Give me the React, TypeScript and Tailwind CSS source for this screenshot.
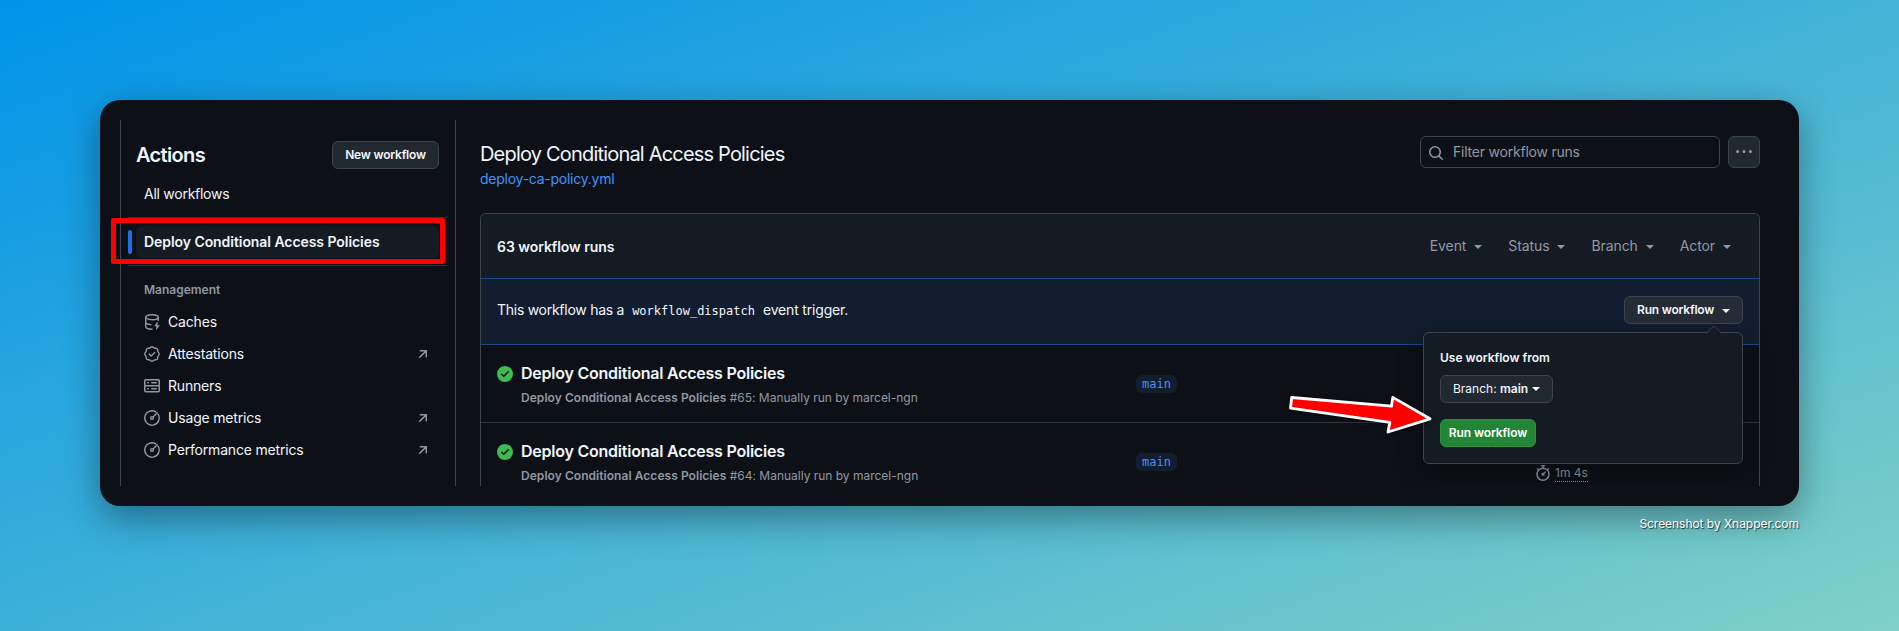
import React from "react";

const paths = {
  search:
    "M10.68 11.74a6 6 0 0 1-7.922-8.982 6 6 0 0 1 8.982 7.922l3.04 3.04a.749.749 0 0 1-.326 1.275.749.749 0 0 1-.734-.215ZM11.5 7a4.499 4.499 0 1 0-8.997 0A4.499 4.499 0 0 0 11.5 7Z",
  check:
    "M8 16A8 8 0 1 1 8 0a8 8 0 0 1 0 16Zm3.78-9.72a.751.751 0 0 0-.018-1.042.751.751 0 0 0-1.042-.018L6.75 9.19 5.28 7.72a.751.751 0 0 0-1.042.018.751.751 0 0 0-.018 1.042l2 2a.75.75 0 0 0 1.06 0Z",
  kebab:
    "M8 9a1.5 1.5 0 1 0 0-3 1.5 1.5 0 0 0 0 3ZM1.5 9a1.5 1.5 0 1 0 0-3 1.5 1.5 0 0 0 0 3Zm13 0a1.5 1.5 0 1 0 0-3 1.5 1.5 0 0 0 0 3Z",
  arrow:
    "M4.53 4.75A.75.75 0 0 1 5.28 4h6.01a.75.75 0 0 1 .75.75v6.01a.75.75 0 0 1-1.5 0v-4.2l-5.26 5.261a.749.749 0 0 1-1.275-.326.749.749 0 0 1 .215-.734L9.48 5.5h-4.2a.75.75 0 0 1-.75-.75Z",
  server:
    "M1.75 1h12.5c.966 0 1.75.784 1.75 1.75v4c0 .372-.116.717-.314 1 .198.283.314.628.314 1v4a1.75 1.75 0 0 1-1.75 1.75H1.75A1.75 1.75 0 0 1 0 12.75v-4c0-.358.109-.707.314-1a1.739 1.739 0 0 1-.314-1v-4C0 1.784.784 1 1.75 1ZM1.5 2.75v4c0 .138.112.25.25.25h12.5a.25.25 0 0 0 .25-.25v-4a.25.25 0 0 0-.25-.25H1.75a.25.25 0 0 0-.25.25Zm.25 5.75a.25.25 0 0 0-.25.25v4c0 .138.112.25.25.25h12.5a.25.25 0 0 0 .25-.25v-4a.25.25 0 0 0-.25-.25ZM7 4.75A.75.75 0 0 1 7.75 4h4.5a.75.75 0 0 1 0 1.5h-4.5A.75.75 0 0 1 7 4.75ZM7.75 10h4.5a.75.75 0 0 1 0 1.5h-4.5a.75.75 0 0 1 0-1.5ZM3 4.75A.75.75 0 0 1 3.75 4h.5a.75.75 0 0 1 0 1.5h-.5A.75.75 0 0 1 3 4.75ZM3.75 10h.5a.75.75 0 0 1 0 1.5h-.5a.75.75 0 0 1 0-1.5Z",
  stopwatch:
    "M5.75.75A.75.75 0 0 1 6.5 0h3a.75.75 0 0 1 0 1.5h-.75v1l-.001.041a6.724 6.724 0 0 1 3.464 1.435l.007-.006.75-.75a.749.749 0 0 1 1.275.326.749.749 0 0 1-.215.734l-.75.75-.006.007a6.75 6.75 0 1 1-10.548 0L2.72 5.03l-.75-.75a.751.751 0 0 1 .018-1.042.751.751 0 0 1 1.042-.018l.75.75.007.006A6.72 6.72 0 0 1 7.25 2.541V1.5H6.5a.75.75 0 0 1-.75-.75ZM8 14.5a5.25 5.25 0 1 0-.001-10.501A5.25 5.25 0 0 0 8 14.5Zm.389-6.7 1.33-1.33a.75.75 0 1 1 1.061 1.06L9.45 8.861A1.503 1.503 0 0 1 8 10.75a1.499 1.499 0 1 1 .389-2.95Z",
};

function Icon({ name, className = "size-4" }: { name: keyof typeof paths; className?: string }) {
  return (
    <svg viewBox="0 0 16 16" fill="currentColor" className={`shrink-0 ${className}`}>
      <path d={paths[name]} />
    </svg>
  );
}

function Line({ children }: { children: React.ReactNode }) {
  return (
    <svg
      viewBox="0 0 16 16"
      fill="none"
      stroke="currentColor"
      strokeWidth="1.4"
      strokeLinecap="round"
      strokeLinejoin="round"
      className="size-4 shrink-0"
    >
      {children}
    </svg>
  );
}

const CacheIcon = () => (
  <Line>
    <ellipse cx="8" cy="3.2" rx="6.3" ry="2.5" />
    <path d="M1.700 3.200v9.300c0 1.500 2.500 2.600 6.300 2.800M1.700 8c0 1.300 2 2.300 5.300 2.600M14.300 3.200v3.200" />
    <path d="M13.300 8.300 10.800 12h1.700v3.400l2.800-3.900h-2Z" fill="currentColor" strokeWidth=".6" />
  </Line>
);

const VerifiedIcon = () => (
  <Line>
    <path d="M8 .8c1.300 0 1.600 1 2.500 1.300.9.400 1.900-.1 2.700.7.800.8.300 1.800.7 2.700.300.9 1.300 1.200 1.300 2.500s-1 1.600-1.300 2.500c-.4.9.1 1.900-.7 2.700-.8.800-1.800.300-2.700.7-.9.300-1.200 1.300-2.500 1.300s-1.600-1-2.500-1.300c-.9-.4-1.900.1-2.700-.7-.8-.8-.3-1.800-.7-2.700C1.800 9.600.8 9.300.8 8s1-1.600 1.300-2.500c.4-.9-.1-1.900.7-2.700.8-.8 1.800-.3 2.700-.7C6.400 1.800 6.700.8 8 .8Z" />
    <path d="m5.300 8.100 1.900 1.900 3.500-3.600" />
  </Line>
);

const MeterIcon = () => (
  <Line>
    <path d="M11.900 1.950A7.200 7.200 0 1 0 14.200 4.400" />
    <circle cx="8" cy="8" r="1.400" />
    <path d="m9.100 6.900 4.200-4.200" />
  </Line>
);

function Caret({ className = "" }: { className?: string }) {
  return (
    <svg viewBox="0 0 8 4" fill="currentColor" className={`h-1 w-2 shrink-0 ${className}`}>
      <path d="M0 0h8L4 4Z" />
    </svg>
  );
}

const manage = [
  { label: "Caches", icon: <CacheIcon />, ext: false },
  { label: "Attestations", icon: <VerifiedIcon />, ext: true },
  { label: "Runners", icon: <Icon name="server" />, ext: false },
  { label: "Usage metrics", icon: <MeterIcon />, ext: true },
  { label: "Performance metrics", icon: <MeterIcon />, ext: true },
];

function Sidebar() {
  return (
    <aside className="h-full w-[336px] shrink-0 border-x border-[#3d444d] px-[7px]">
      <div className="mt-[21px] flex h-[28px] items-center justify-between pl-2 pr-[9px]">
        <h2 className="text-[20px] font-semibold leading-7 tracking-[-0.65px]">Actions</h2>
        <button className="h-7 w-[107px] rounded-md border border-[#3d444d] bg-[#212830] text-xs font-semibold tracking-[-0.2px]">
          New workflow
        </button>
      </div>
      <div className="mt-[9px] flex h-8 items-center pl-4 text-sm tracking-[-0.26px]">All workflows</div>
      <div className="relative mr-px mt-[7px] h-[49px] border-y border-[#2f353d] py-2">
        <div className="absolute left-0 top-[12px] h-6 w-1 rounded-md bg-[#1f6feb]" />
        <div className="mx-2 flex h-8 items-center rounded-md bg-[#151b23] pl-2 text-sm font-semibold tracking-[-0.06px]">
          Deploy Conditional Access Policies
        </div>
        <div className="absolute -left-[17px] top-0 h-[46px] w-[334px] rounded-[2px] border-[5px] border-[#ff0000]" />
      </div>
      <div className="mt-2 flex h-8 items-center pl-4 text-xs font-semibold text-[#9198a1]">Management</div>
      {manage.map((m) => (
        <div key={m.label} className="flex h-8 items-center pl-4 pr-[17px] text-sm">
          <span className="text-[#9198a1]">{m.icon}</span>
          <span className="ml-2 flex-1 tracking-[-0.18px]">{m.label}</span>
          {m.ext && <Icon name="arrow" className="size-4 text-[#9198a1]" />}
        </div>
      ))}
    </aside>
  );
}

function Run({ id, last }: { id: number; last?: boolean }) {
  return (
    <div className={`flex h-[78px] shrink-0 items-start pl-4 ${last ? "" : "border-b border-[#2f353d]"}`}>
      <Icon name="check" className="mt-[21px] size-4 text-[#3fb950]" />
      <div className="ml-2 w-[615px] pt-4">
        <div className="text-base font-semibold leading-6 tracking-[-0.23px]">Deploy Conditional Access Policies</div>
        <div className="mt-1 text-xs leading-[18px] tracking-[-0.01px] text-[#9198a1]">
          <span className="font-semibold tracking-[0.05px]">Deploy Conditional Access Policies</span> #{id}: Manually
          run by marcel-ngn
        </div>
      </div>
      <span className="mt-[30px] flex h-[18px] w-[41px] items-center justify-center rounded-md bg-[#121d2f] font-['DejaVu_Sans_Mono',monospace] text-xs text-[#4493f8]">
        main
      </span>
      {last && (
        <div className="ml-[358px] mt-[42px] flex h-4 items-center text-[#9198a1]">
          <Icon name="stopwatch" />
          <span className="ml-1 border-b border-dotted border-[#9198a1] text-xs leading-[17px]">1m 4s</span>
        </div>
      )}
    </div>
  );
}

function Popover() {
  return (
    <div className="absolute right-4 top-[53px] h-[132px] w-[320px] rounded-md border border-[#3d444d] bg-[#151b23] pl-4 pt-4 shadow-[0_8px_24px_rgba(1,4,9,0.4)]">
      <svg viewBox="0 0 16 9" className="absolute -top-2 right-5 h-[9px] w-4">
        <path d="M0 9 8 1l8 8Z" fill="#151b23" />
        <path d="M.5 8 8 .8 15.500 8" fill="none" stroke="#3d444d" />
      </svg>
      <div className="text-xs font-semibold leading-[18px]">Use workflow from</div>
      <button className="mt-2 flex h-7 w-[113px] items-center rounded-md border border-[#3d444d] bg-[#212830] pl-3 text-xs">
        <span>
          Branch: <b className="font-semibold">main</b>
        </span>
        <Caret className="ml-1" />
      </button>
      <button className="mt-4 h-7 w-24 rounded-md border border-[#2f8f40] bg-[#238636] text-xs font-semibold tracking-[-0.1px] text-white">
        Run workflow
      </button>
    </div>
  );
}

const filters = ["Event", "Status", "Branch", "Actor"];

export default function App() {
  return (
    <div className="relative h-[631px] w-[1899px] overflow-hidden bg-[linear-gradient(160deg,#0093E9_0%,#80D0C7_100%)] px-[100px] pt-[100px] font-['Inter',sans-serif] text-[#f0f6fc]">
      <div className="h-[406px] rounded-[20px] bg-[#0d1117] p-5 shadow-[0_12px_36px_rgba(0,0,0,0.38)]">
        <div className="flex h-[366px]">
          <Sidebar />
          <main className="flex h-full flex-1 flex-col overflow-hidden pl-6 pr-[19px]">
            <div className="flex h-[93px] shrink-0 pt-4">
              <div className="flex-1 pt-[3px]">
                <h1 className="text-[20px] leading-[30px] tracking-[-0.81px]">Deploy Conditional Access Policies</h1>
                <a className="block text-sm leading-5 tracking-[-0.25px] text-[#4493f8]">deploy-ca-policy.yml</a>
              </div>
              <div className="flex h-8 w-[300px] items-center rounded-md border border-[#3d444d] pl-[7px] text-sm text-[#9198a1]">
                <Icon name="search" className="mt-px size-4" />
                <span className="ml-[9px] tracking-[-0.22px]">Filter workflow runs</span>
              </div>
              <button className="ml-2 flex size-8 items-center justify-center rounded-md border border-[#3d444d] bg-[#212830] text-[#9198a1]">
                <Icon name="kebab" />
              </button>
            </div>
            <div className="flex flex-1 flex-col rounded-t-md border border-b-0 border-[#3d444d]">
              <div className="flex h-[64px] shrink-0 items-center rounded-t-md bg-[#151b23] pl-4 text-sm">
                <div className="flex-1 pt-0.5 font-semibold tracking-[-0.05px]">63 workflow runs</div>
                <div className="flex pr-[28px] text-[#9198a1]">
                  {filters.map((label) => (
                    <div key={label} className="flex items-center pl-[26px]">
                      <span className="tracking-[-0.1px]">{label}</span>
                      <Caret className="ml-2 mt-px" />
                    </div>
                  ))}
                </div>
              </div>
              <div className="relative z-10 flex h-[67px] shrink-0 items-center border-y border-[#1d4a86] bg-[#121d2f] px-4 pb-[3px] text-sm">
                <div className="flex-1 tracking-[-0.27px]">
                  This workflow has a
                  <code className="mx-1 px-1 font-['DejaVu_Sans_Mono',monospace] text-xs tracking-normal">
                    workflow_dispatch
                  </code>
                  <span className="tracking-[-0.18px]">event trigger.</span>
                </div>
                <button className="flex h-7 w-[119px] items-center rounded-md border border-[#3d444d] bg-[#262c36] pl-3 text-xs font-semibold tracking-[-0.2px]">
                  Run workflow
                  <Caret className="ml-2 mt-px" />
                </button>
                <Popover />
              </div>
              <Run id={65} />
              <Run id={64} last />
            </div>
          </main>
        </div>
      </div>
      <div className="mt-[9px] text-right text-xs leading-[18px] tracking-[-0.04px] text-white [text-shadow:1px_1px_1px_rgba(0,0,0,0.7)]">
        Screenshot by Xnapper.com
      </div>
      <svg
        viewBox="1280 390 160 50"
        className="absolute left-[1280px] top-[390px] z-20 h-[50px] w-[160px] drop-shadow-[0_1px_2px_rgba(0,0,0,0.6)]"
      >
        <path
          d="M1291.700 397.500 1391.500 406.200 1392.800 397.400 1430 418.800 1388 432 1389.800 422.400 1290.500 408.200Z"
          fill="#ff0000"
          stroke="#ffffff"
          strokeWidth="2.800"
          strokeLinejoin="round"
        />
      </svg>
    </div>
  );
}
